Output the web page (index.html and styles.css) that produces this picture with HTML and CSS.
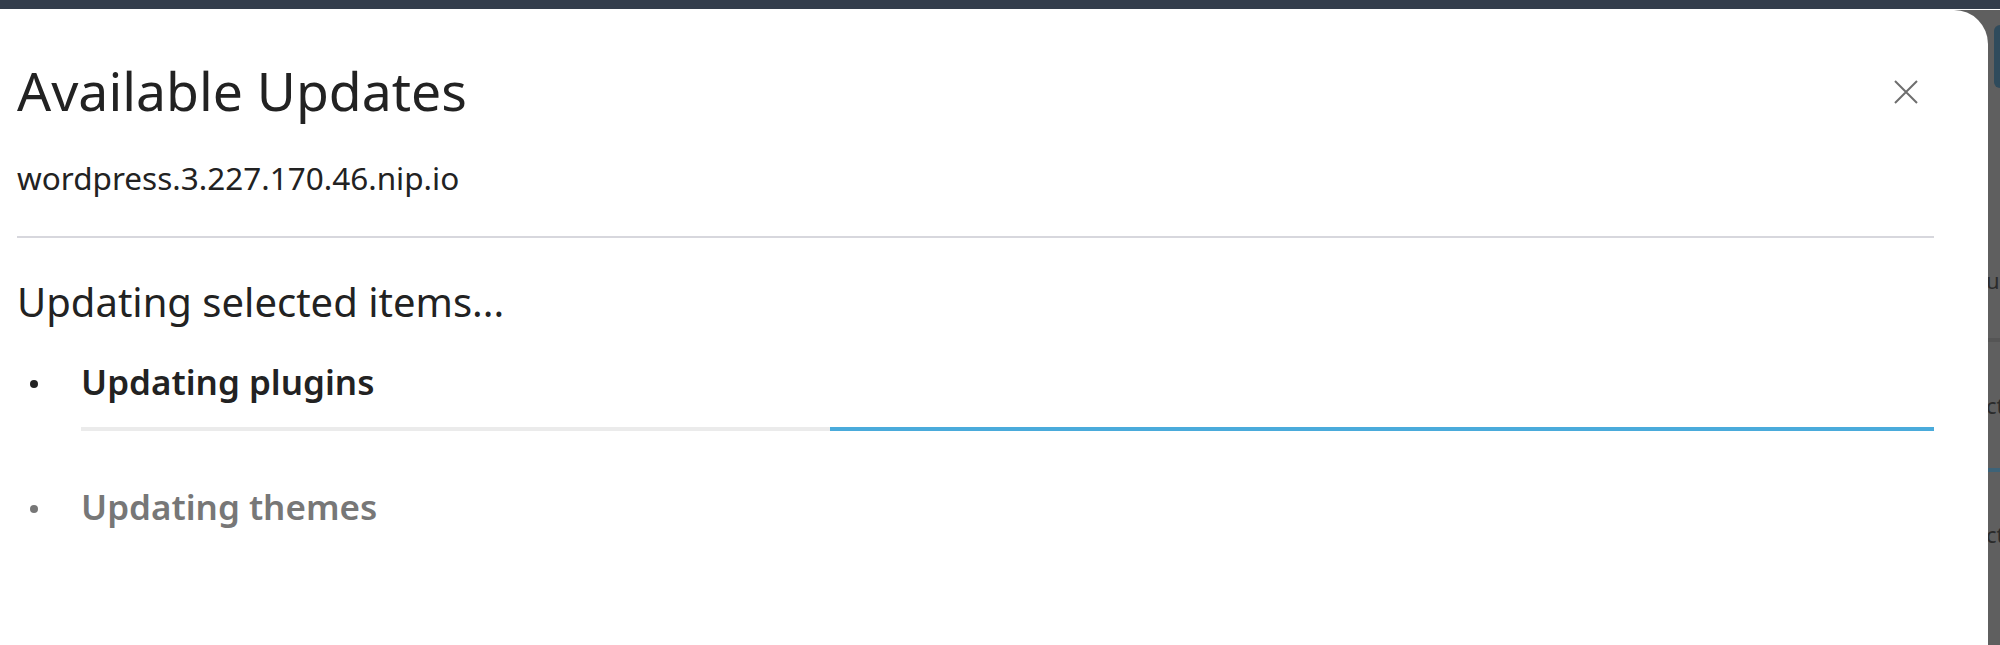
FILE: index.html
```html
<!DOCTYPE html>
<html lang="en">
<head>
<meta charset="utf-8">
<title>Available Updates</title>
<link rel="stylesheet" href="styles.css">
</head>
<body>
<div class="topbar"></div>
<div class="stage">
  <div class="modal">
    <div class="modal-header">
      <h1 class="title">Available Updates</h1>
      <button class="close" aria-label="Close">
        <svg width="24" height="24" viewBox="0 0 24 24"><path d="M1 1 L23 23 M23 1 L1 23" stroke="#6e6e6e" stroke-width="2" fill="none"/></svg>
      </button>
    </div>
    <div class="subtitle">wordpress.3.227.170.46.nip.io</div>
    <hr class="rule">
    <h2 class="heading">Updating selected items...</h2>
    <ul class="steps">
      <li class="step active">
        <span class="bullet-cell"><span class="bullet"></span></span>
        <div class="step-body">
          <div class="step-label">Updating plugins</div>
          <div class="bar"><div class="bar-fill"></div></div>
        </div>
      </li>
      <li class="step pending">
        <span class="bullet-cell"><span class="bullet"></span></span>
        <div class="step-body">
          <div class="step-label">Updating themes</div>
        </div>
      </li>
    </ul>
  </div>
  <div class="behind">
    <div class="behind-tab"></div>
    <div class="behind-text t1">us</div>
    <div class="behind-line"></div>
    <div class="behind-text t2">ct</div>
    <div class="behind-line blue"></div>
    <div class="behind-text t3">ct</div>
  </div>
</div>
</body>
</html>
```
FILE: styles.css
```css
html, body {
  margin: 0;
  padding: 0;
}
body {
  background: #5f5f5f;
  font-family: "Noto Sans", "Open Sans", sans-serif;
  color: #222;
  overflow: hidden;
}
.topbar {
  height: 9px;
  background: #343e4c;
  border-bottom: 1px solid #ffffff;
}
.stage {
  display: flex;
  height: 635px;
}
.modal {
  flex: none;
  width: 1988px;
  box-sizing: border-box;
  background: #fff;
  border-top-right-radius: 34px;
  padding: 44px 54px 0 17px;
}
.modal-header {
  display: flex;
  justify-content: space-between;
  align-items: flex-start;
}
.title {
  margin: 0;
  font-size: 53.5px;
  line-height: 74px;
  font-weight: 400;
  color: #222;
}
.close {
  margin: 26px 16px 0 0;
  padding: 0;
  border: 0;
  background: none;
  width: 24px;
  height: 24px;
  display: flex;
}
.subtitle {
  margin-top: 30px;
  font-size: 31.5px;
  line-height: 40px;
  color: #222;
}
.rule {
  margin: 38px 0 0;
  height: 2px;
  border: 0;
  background: #d7d7dd;
}
.heading {
  margin: 36px 0 0;
  font-size: 40px;
  line-height: 55px;
  font-weight: 400;
  color: #222;
}
.steps {
  list-style: none;
  margin: 31px 0 0;
  padding: 0;
}
.step {
  display: grid;
  grid-template-columns: 64px 1fr;
}
.step + .step {
  margin-top: 54px;
}
.bullet-cell {
  height: 44px;
  display: flex;
  align-items: center;
  padding-top: 4px;
  box-sizing: border-box;
}
.bullet {
  width: 8px;
  height: 8px;
  border-radius: 50%;
  margin-left: 13px;
  background: #222;
}
.step-label {
  font-size: 35px;
  line-height: 44px;
  font-weight: 600;
}
.active .step-label {
  color: #222;
}
.pending .step-label {
  color: #777;
}
.pending .bullet {
  background: #777;
}
.bar {
  margin-top: 23px;
  height: 4px;
  background: #ebebeb;
  display: flex;
}
.bar-fill {
  margin-left: 40.4%;
  flex: 1;
  background: #4aabdb;
}
.behind {
  flex: 1;
  overflow: hidden;
  display: flex;
  flex-direction: column;
  color: #2b2b2b;
}
.behind-tab {
  margin: 15px 0 0 6px;
  height: 63px;
  background: #2f4b5c;
  border-radius: 6px 0 0 6px;
}
.behind-text {
  font-size: 22px;
  line-height: 24px;
  white-space: nowrap;
  margin-left: -2px;
}
.t1 { margin-top: 180px; }
.behind-line {
  height: 4px;
  background: #555;
  margin-top: 46px;
}
.t2 { margin-top: 51px; }
.behind-line.blue {
  background: #3d6378;
  margin-top: 51px;
}
.t3 { margin-top: 50px; }
```
